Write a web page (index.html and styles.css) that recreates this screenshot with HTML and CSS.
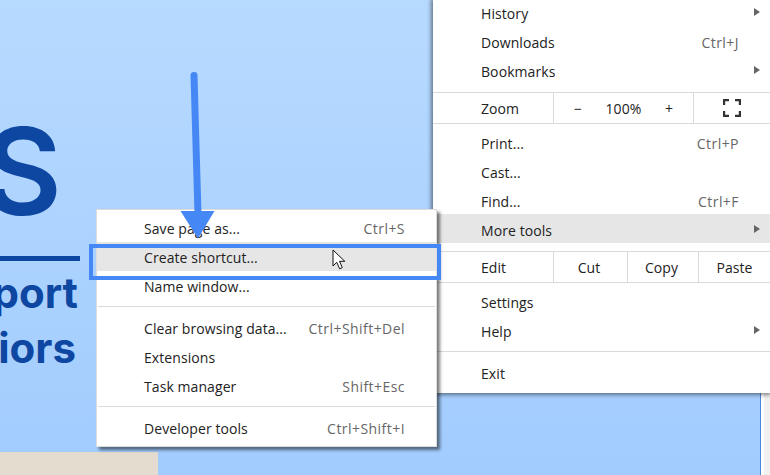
FILE: index.html
```html
<!DOCTYPE html>
<html lang="en">
<head>
<meta charset="utf-8">
<title>Create shortcut</title>
<link rel="stylesheet" href="styles.css">
</head>
<body>
<div class="stage">
  <main class="hero">
    <div class="hero-text">
      <div class="big">S</div>
      <div class="rule"></div>
      <div class="tag">Support</div>
      <div class="tag tag-b">Warriors</div>
    </div>
    <div class="photo"></div>
  </main>
  <aside class="page-edge"></aside>

  <nav class="menu main-menu">
    <div class="row"><span class="label">History</span><span class="slot"><i class="caret"></i></span></div>
    <div class="row"><span class="label">Downloads</span><span class="key">Ctrl+J</span><span class="slot"></span></div>
    <div class="row"><span class="label">Bookmarks</span><span class="slot"><i class="caret"></i></span></div>
    <div class="sep sep-a"></div>
    <div class="tool-row">
      <span class="tool-label">Zoom</span>
      <span class="zoom-cell"><span>−</span><span>100%</span><span>+</span></span>
      <span class="full-cell">
        <svg width="18" height="18" viewBox="0 0 18 18"><path d="M1 6V1h5M12 1h5v5M17 12v5h-5M6 17H1v-5" fill="none" stroke="#333" stroke-width="2.4"/></svg>
      </span>
    </div>
    <div class="sep sep-b"></div>
    <div class="row"><span class="label">Print...</span><span class="key">Ctrl+P</span><span class="slot"></span></div>
    <div class="row"><span class="label">Cast...</span><span class="slot"></span></div>
    <div class="row"><span class="label">Find...</span><span class="key">Ctrl+F</span><span class="slot"></span></div>
    <div class="row active"><span class="label">More tools</span><span class="slot"><i class="caret"></i></span></div>
    <div class="sep sep-a"></div>
    <div class="tool-row">
      <span class="tool-label">Edit</span>
      <span class="edit-cell cut">Cut</span>
      <span class="edit-cell copy">Copy</span>
      <span class="edit-cell paste">Paste</span>
    </div>
    <div class="sep sep-b"></div>
    <div class="row"><span class="label">Settings</span><span class="slot"></span></div>
    <div class="row"><span class="label">Help</span><span class="slot"><i class="caret"></i></span></div>
    <div class="sep sep-c"></div>
    <div class="row"><span class="label">Exit</span><span class="slot"></span></div>
  </nav>

  <nav class="menu sub-menu">
    <div class="row"><span class="label">Save page as...</span><span class="key">Ctrl+S</span></div>
    <div class="row active"><span class="label">Create shortcut...</span></div>
    <div class="row"><span class="label">Name window...</span></div>
    <div class="sep sep-s"></div>
    <div class="row"><span class="label">Clear browsing data...</span><span class="key">Ctrl+Shift+Del</span></div>
    <div class="row"><span class="label">Extensions</span></div>
    <div class="row"><span class="label">Task manager</span><span class="key">Shift+Esc</span></div>
    <div class="sep sep-s"></div>
    <div class="row"><span class="label">Developer tools</span><span class="key">Ctrl+Shift+I</span></div>
  </nav>

  <div class="callout"></div>
  <svg class="arrow" width="770" height="475" viewBox="0 0 770 475">
    <path d="M194 75.500 198 214" fill="none" stroke="#4587f5" stroke-width="7" stroke-linecap="round"/>
    <path d="M180.500 211H214.500L198 238.500Z" fill="#4587f5"/>
  </svg>
  <svg class="pointer" width="15" height="21" viewBox="0 0 15 21">
    <path d="M1 1V17L4.800 13.300 7.600 19.800 10.300 18.600 7.500 12.300H12.800Z" fill="#fff" stroke="#111" stroke-width="1"/>
  </svg>
</div>
</body>
</html>
```
FILE: styles.css
```css
* { box-sizing: border-box; }
html, body { margin: 0; padding: 0; }
body { width: 770px; height: 475px; overflow: hidden; background: #fff; }

.stage {
  position: relative;
  display: flex;
  width: 770px;
  height: 475px;
  overflow: hidden;
  font-family: "Open Sans", "Noto Sans", sans-serif;
}

.hero {
  width: 761px;
  height: 475px;
  display: flex;
  flex-direction: column;
  justify-content: space-between;
  background: linear-gradient(#b7daff, #a2ccfe);
  border-right: 1px solid #4a86dc;
}
.hero-text {
  width: 80px;
  padding-top: 96px;
  display: flex;
  flex-direction: column;
  color: #0d47a1;
  font-family: "Inter", sans-serif;
  font-weight: 700;
}
.big {
  display: flex;
  justify-content: flex-end;
  height: 155px;
  padding-right: 18px;
  font-size: 121px;
  line-height: 150px;
  font-weight: 600;
  white-space: nowrap;
}
.rule { height: 5px; margin-top: 5px; margin-bottom: 5px; background: #0d47a1; }
.tag {
  display: flex;
  justify-content: flex-end;
  white-space: nowrap;
  height: 55px;
  padding-right: 2px;
  font-size: 42px;
  line-height: 54px;
}
.tag-b { padding-right: 4px; }
.photo { width: 158px; height: 23px; background: #e3dccf; }
.page-edge {
  flex: 1;
  border-left: 3px solid #fff;
  background: #f1f1f1;
}

.menu {
  position: absolute;
  background: #fff;
  color: #222;
  font-size: 14px;
  letter-spacing: .08px;
}
.main-menu {
  left: 433px;
  top: -3px;
  width: 340px;
  height: 396px;
  box-shadow: -2px 2px 4px rgba(0, 0, 0, .45);
}
.sub-menu {
  left: 96px;
  top: 209px;
  width: 341px;
  height: 238px;
  padding-top: 3px;
  border: 1px solid #dcdcdc;
  box-shadow: 3px 3px 3px rgba(0, 0, 0, .5);
}

.row {
  display: flex;
  align-items: center;
  height: 29px;
  padding-left: 47px;
}
.main-menu .row { padding-left: 48px; padding-top: 4px; }
.sub-menu .row { padding-right: 31px; padding-top: 2px; }
.row.active { background: #e6e6e6; }
.label { flex: 1; white-space: nowrap; }
.key { color: #666; white-space: nowrap; letter-spacing: .45px; }
.slot { width: 34px; height: 10px; display: flex; justify-content: flex-end; padding-right: 13px; margin-top: -2px; }
.caret {
  width: 0;
  height: 0;
  border-left: 6px solid #666;
  border-top: 4.500px solid transparent;
  border-bottom: 4.500px solid transparent;
}

.sep { height: 1px; background: #dadada; }
.sep-a { margin-top: 8px; }
.sep-b { margin-bottom: 3px; }
.sep-c { margin-top: 7px; margin-bottom: 5px; }
.sep-s { margin: 6px 1px; }

.tool-row { display: flex; align-items: stretch; height: 30px; }
.tool-row > span { display: flex; align-items: center; }
.tool-label { width: 120px; padding-left: 48px; }
.zoom-cell, .full-cell, .edit-cell { border-left: 1px solid #dadada; }
.zoom-cell { width: 140px; justify-content: space-between; padding: 0 20px 0 20px; }
.full-cell { flex: 1; padding-left: 29px; }
.edit-cell { justify-content: center; }
.cut { width: 74px; padding-right: 3px; }
.copy { width: 71px; padding-right: 3px; }
.paste { width: 72px; }

.callout {
  position: absolute;
  left: 89px;
  top: 244px;
  width: 352px;
  height: 36px;
  border: 4px solid #4587f5;
}
.arrow { position: absolute; left: 0; top: 0; pointer-events: none; }
.pointer { position: absolute; left: 332px; top: 249px; }
```
